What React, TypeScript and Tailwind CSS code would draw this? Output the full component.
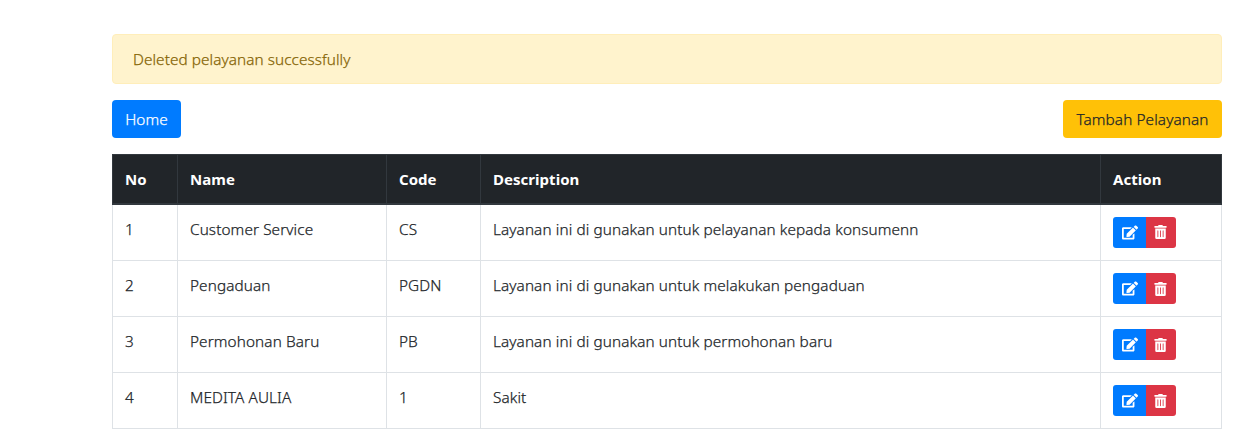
import { FaEdit, FaTrashAlt } from "react-icons/fa";

const columns = ["No", "Name", "Code", "Description", "Action"];

const rows = [
  { no: "1", name: "Customer Service", code: "CS", description: "Layanan ini di gunakan untuk pelayanan kepada konsumenn" },
  { no: "2", name: "Pengaduan", code: "PGDN", description: "Layanan ini di gunakan untuk melakukan pengaduan" },
  { no: "3", name: "Permohonan Baru", code: "PB", description: "Layanan ini di gunakan untuk permohonan baru" },
  { no: "4", name: "MEDITA AULIA", code: "1", description: "Sakit" },
];

export default function App() {
  return (
    <main className="h-[446px] overflow-hidden bg-white pt-[34px] pr-[31px] pl-[112px] font-['Noto_Sans',sans-serif] text-[15.3px] leading-6 font-light tracking-[0.11px] text-[#212529] [-webkit-text-stroke:0.25px]">
      <div className="mb-4 h-[50px] rounded border border-[#ffeeba] bg-[#fff3cd] px-5 py-3 tracking-[0.08px] text-[#856404]">
        Deleted pelayanan successfully
      </div>
      <div className="mb-4 flex justify-between">
        <button className="h-[38px] w-[69px] rounded bg-[#007bff] text-white">Home</button>
        <button className="h-[38px] w-[159px] rounded bg-[#ffc107]">Tambah Pelayanan</button>
      </div>
      <table className="w-[1110px] table-fixed border-collapse text-left">
        <colgroup>
          <col className="w-[65px]" />
          <col className="w-[209px]" />
          <col className="w-[94px]" />
          <col className="w-[620px]" />
          <col />
        </colgroup>
        <thead>
          <tr className="h-[49px] bg-[#212529] align-top text-white">
            {columns.map((column) => (
              <th key={column} className="border border-b-2 border-[#32383e] px-3 pt-3 pb-0 text-[15px] font-bold tracking-[0.03px] [-webkit-text-stroke:0]">
                {column}
              </th>
            ))}
          </tr>
        </thead>
        <tbody>
          {rows.map((row) => (
            <tr key={row.no} className="h-14 align-top first:h-[57px]">
              <td className="border border-[#dee2e6] px-3 pt-3">{row.no}</td>
              <td className="border border-[#dee2e6] px-3 pt-3">{row.name}</td>
              <td className="border border-[#dee2e6] px-3 pt-3">{row.code}</td>
              <td className="border border-[#dee2e6] px-3 pt-3">{row.description}</td>
              <td className="border border-[#dee2e6] px-3 pt-3">
                <div className="flex h-[31px] w-[63px] overflow-hidden rounded-[3px] text-white">
                  <button aria-label="Edit" className="flex w-[33px] items-center justify-center bg-[#007bff]">
                    <FaEdit className="h-[15px] w-4" />
                  </button>
                  <button aria-label="Delete" className="flex w-[30px] items-center justify-center bg-[#dc3545] pr-px">
                    <FaTrashAlt className="h-[14px] w-[13px]" />
                  </button>
                </div>
              </td>
            </tr>
          ))}
        </tbody>
      </table>
    </main>
  );
}
